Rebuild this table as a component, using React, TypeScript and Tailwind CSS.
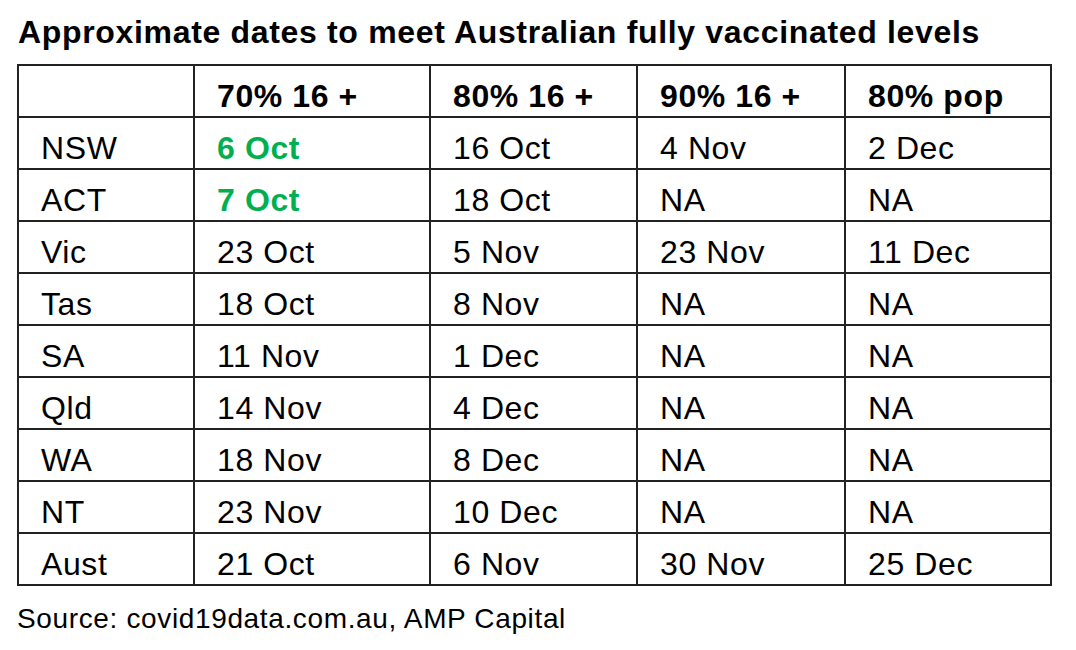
import React from "react";

const widths = ["w-[176px]", "w-[236px]", "w-[207px]", "w-[208px]", "w-[206px]"];

const header = ["", "70% 16 +", "80% 16 +", "90% 16 +", "80% pop"];

const rows: string[][] = [
  ["NSW", "6 Oct", "16 Oct", "4 Nov", "2 Dec"],
  ["ACT", "7 Oct", "18 Oct", "NA", "NA"],
  ["Vic", "23 Oct", "5 Nov", "23 Nov", "11 Dec"],
  ["Tas", "18 Oct", "8 Nov", "NA", "NA"],
  ["SA", "11 Nov", "1 Dec", "NA", "NA"],
  ["Qld", "14 Nov", "4 Dec", "NA", "NA"],
  ["WA", "18 Nov", "8 Dec", "NA", "NA"],
  ["NT", "23 Nov", "10 Dec", "NA", "NA"],
  ["Aust", "21 Oct", "6 Nov", "30 Nov", "25 Dec"],
];

function Cell({ i, children, cls }: { i: number; children: React.ReactNode; cls?: string }) {
  return (
    <div
      className={`${widths[i]} h-[52px] shrink-0 border-r-2 border-b-2 border-[#222] pl-[22px] pt-[14px] text-[32px] leading-[32px] tracking-[0.6px] whitespace-nowrap ${cls ?? ""}`}
    >
      {children}
    </div>
  );
}

export default function App() {
  return (
    <div
      className="w-[1076px] h-[650px] bg-white text-black overflow-hidden"
      style={{ fontFamily: '"Liberation Sans", Arial, sans-serif' }}
    >
      <div className="pl-[18px] pt-[16px] text-[32px] leading-[32px] font-bold tracking-[0.67px] whitespace-nowrap">
        Approximate dates to meet Australian fully vaccinated levels
      </div>
      <div className="ml-[17px] mt-[16px] w-[1035px] border-l-2 border-t-2 border-[#222] flex flex-col">
        <div className="flex">
          {header.map((h, i) => (
            <Cell key={i} i={i} cls="font-bold">
              {h}
            </Cell>
          ))}
        </div>
        {rows.map((r, ri) => (
          <div key={ri} className="flex">
            {r.map((c, i) => (
              <Cell key={i} i={i} cls={i === 1 && ri < 2 ? "font-bold text-[#00b050]" : ""}>
                {c}
              </Cell>
            ))}
          </div>
        ))}
      </div>
      <div className="pl-[17px] mt-[19px] text-[28px] leading-[28px] tracking-[0.64px] whitespace-nowrap">
        Source: covid19data.com.au, AMP Capital
      </div>
    </div>
  );
}
